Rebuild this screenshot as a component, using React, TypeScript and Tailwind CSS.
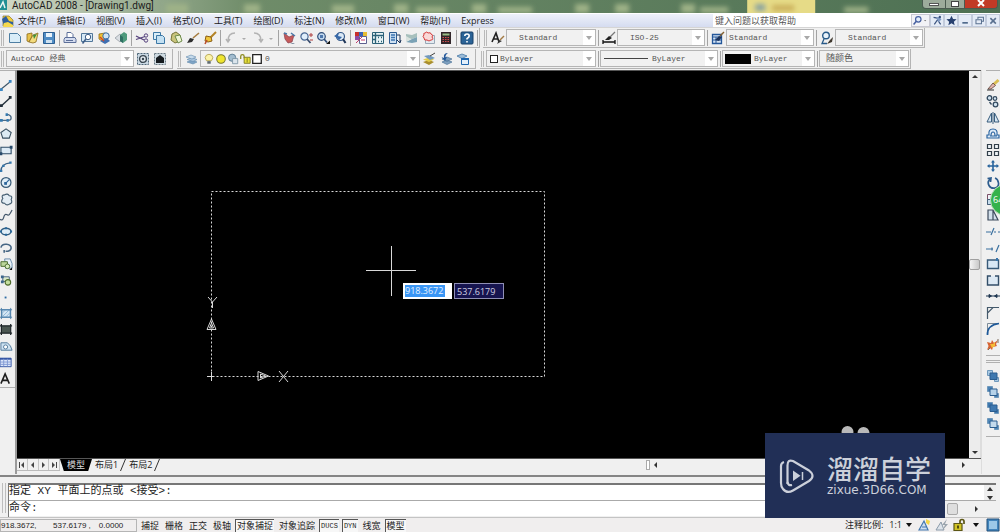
import React from "react";

const icons: Record<string, React.ReactNode> = {
  // standard toolbar
  new: <path d="M1.5 2.5h8l3 3v6h-11z" fill="#d9edf8" stroke="#4d7ea3" />,
  open: (
    <>
      <path d="M2 3l5-1v3l-3 6-2-1z" fill="#e8c24a" stroke="#8a6a1a" strokeWidth=".8" />
      <path d="M4 11L8 4l5-2-2 9-3 1z" fill="#f3dc7e" stroke="#8a6a1a" strokeWidth=".8" />
      <path d="M8 4l4-1-3 5z" fill="#3f8f3c" />
    </>
  ),
  save: (
    <>
      <path d="M1.5 1.5h11v11h-11z" fill="#4f8cc4" stroke="#2c5f92" />
      <path d="M4 2h6v4H4z" fill="#e8f3fb" />
      <path d="M4 9h6v3H4z" fill="#cfe2f1" />
    </>
  ),
  print: (
    <>
      <path d="M4 6V1.5h4l2 2V6" fill="#fff" stroke="#5c6f99" />
      <path d="M2 6.5h10l1 2v3H1v-3z" fill="#d4dcef" stroke="#5c6f99" />
      <path d="M3 9.5h7" stroke="#5c6f99" />
    </>
  ),
  preview: (
    <>
      <path d="M1.5 2.5h11v8h-11z" fill="#d6e8f5" stroke="#52779a" />
      <circle cx="8" cy="6" r="2.7" fill="#fff" stroke="#3f5f88" />
      <path d="M6 8l-3.5 4.5" stroke="#3f5f88" strokeWidth="1.6" />
    </>
  ),
  publish: (
    <>
      <path d="M2 3l6-1 3 5-4 4-5-3z" fill="#f2c230" stroke="#8c6b17" strokeWidth=".8" />
      <circle cx="9" cy="5" r="3.2" fill="#cfe3f4" stroke="#38699c" />
      <path d="M3 10l5 3 5-3-3-3z" fill="#3f6fb1" />
      <path d="M3 6l4 4" stroke="#d2452b" strokeWidth="1.5" />
    </>
  ),
  dwf: (
    <>
      <path d="M1 7l5-4 4 3-4 5z" fill="#d9dde2" stroke="#8e959e" strokeWidth=".7" />
      <path d="M6 4l4-3 3 2v6l-4 3-3-2z" fill="#4f9a7d" />
      <path d="M6 4l3 2v6l-3-2z" fill="#2f6f63" />
    </>
  ),
  cut: (
    <>
      <path d="M1 5l8 4M1 8.500l9-3" stroke="#54407c" strokeWidth="1.3" />
      <circle cx="11" cy="4.500" r="1.7" fill="none" stroke="#54407c" />
      <circle cx="11" cy="9.500" r="1.7" fill="none" stroke="#54407c" />
    </>
  ),
  copy: (
    <>
      <path d="M1.5 1.500h7v7h-7z" fill="#d9edf8" stroke="#3c78a5" />
      <path d="M4.500 4.500h6l2 2v6h-8z" fill="#c3e0f2" stroke="#3c78a5" />
    </>
  ),
  paste: (
    <>
      <path d="M3 3l4-2 4 3v6l-5 2-4-3z" fill="#c9c47c" stroke="#77753a" />
      <path d="M6 5l5-1 2 6-4 2z" fill="#eef5d4" stroke="#6d8b4a" />
    </>
  ),
  match: (
    <>
      <path d="M13 2L7 7" stroke="#a67c40" strokeWidth="1.6" />
      <path d="M1 12l3-5 4 1-2 3z" fill="#2d2d2d" />
    </>
  ),
  block: (
    <>
      <path d="M13 1L7 7" stroke="#b38225" strokeWidth="2" />
      <path d="M3 5l5 1 1 4-4 1-3-1z" fill="#f0c63c" stroke="#8a5d13" />
      <path d="M2 13l2-4" stroke="#bb4b2a" strokeWidth="1.6" />
    </>
  ),
  undo: <path d="M11 2Q4 2 4 10M2 8l2 3 2-3" fill="none" stroke="#b3b3b3" strokeWidth="1.500" />,
  redo: <path d="M3 2Q10 2 10 10M8 8l2 3 2-3" fill="none" stroke="#b3b3b3" strokeWidth="1.500" />,
  more: <path d="M5 7h4l-2 2z" fill="#aaa" />,
  pan: (
    <>
      <path d="M2 2l5 4 5-2-2 7-4 1-3-4z" fill="#c65a5a" stroke="#843c4a" strokeWidth=".7" />
      <path d="M9 2l4 3M2 2l3 1" stroke="#4a79a8" strokeWidth="1.5" />
      <path d="M8 12h5l-2 1z" fill="#6e7f94" />
    </>
  ),
  zoom: (
    <>
      <circle cx="5.500" cy="5.500" r="3.600" fill="#e0eefa" stroke="#486894" strokeWidth="1.2" />
      <path d="M8 8l3.500 4" stroke="#3a4d6e" strokeWidth="1.800" />
      <path d="M10 4h4M12 2v4M11 9h3" stroke="#b04040" />
    </>
  ),
  zoomWindow: (
    <>
      <circle cx="5.500" cy="5.500" r="3.800" fill="#c3daf0" stroke="#314f7a" strokeWidth="1.2" />
      <path d="M4 4h3v3H4z" fill="#4e77ac" />
      <path d="M8 8l3 3.500" stroke="#314f7a" strokeWidth="1.800" />
      <path d="M10 13h4V9.500z" fill="#111" />
    </>
  ),
  zoomPrev: (
    <>
      <circle cx="7.500" cy="5.500" r="4" fill="#dbe9f6" stroke="#355a8a" strokeWidth="1.2" />
      <path d="M10 8l2.500 4" stroke="#1f3558" strokeWidth="2" />
      <path d="M1 5l5-3-1 3 4 1-3 3-2-2z" fill="#3668a8" />
    </>
  ),
  properties: (
    <>
      <path d="M1 1h4v4H1z" fill="#c7302b" />
      <path d="M5 1h4v4H5z" fill="#3a62b8" />
      <path d="M9 1h4v4H9z" fill="#e7bd32" />
      <path d="M1 5h4v4H1z" fill="#8e4ba4" />
      <path d="M5.500 5.500h7v7h-7z" fill="#fff" stroke="#5d5f8f" />
      <path d="M2 12l6-6M7 9h4" stroke="#c33c6c" />
    </>
  ),
  designCenter: (
    <>
      <path d="M1.500 1.500h11v11h-11z" fill="#e7f2f4" stroke="#2b6177" />
      <path d="M4.500 1v12M2 4.500h10M7 6.500h1M10 6.500h1M7 10.500h1M10 10.500h1M2 8.500h2" stroke="#2b6177" strokeWidth="1.300" />
    </>
  ),
  palettes: (
    <>
      <path d="M1.500 1.500h7v11h-7z" fill="#cfe1f2" stroke="#2f5d91" />
      <path d="M3 4h4M3 6.500h4M3 9h4" stroke="#3b73af" strokeWidth="1.400" />
      <path d="M9 4h3v7M9 9l3 3 1-3" fill="none" stroke="#1c3459" />
    </>
  ),
  sheets: (
    <>
      <path d="M1 3l6 1 5-2v4l-5 2-6-1z" fill="#a7c0bd" />
      <path d="M1 11l6 1 5-1V6L7 8z" fill="#7ba2b5" />
      <path d="M1 5l5 3-5 3z" fill="#d8e2de" />
    </>
  ),
  markup: (
    <>
      <path d="M3.500 4.500h9v8h-9z" fill="#e3eaf0" stroke="#98a9b7" />
      <path d="M3 2q2-2 3 0 3-1 3 1 3 1 1 3 2 3-1 3-2 2-4 0-3 1-3-2-2-2 0-3-1-2 1-2z" fill="#f9d8d6" stroke="#d43b3b" />
    </>
  ),
  calc: (
    <>
      <path d="M2 1h10v12H2z" fill="#31262a" />
      <path d="M3.500 2.500h7v2h-7z" fill="#99bd85" />
      <path d="M3.500 6.500h7M3.500 8.500h7M3.500 10.500h7" stroke="#d25050" strokeDasharray="1.500 1" />
    </>
  ),
  help: (
    <>
      <rect x="1" y="1" width="12" height="12" rx="1" fill="#2b6396" stroke="#184168" />
      <path d="M4.800 5q0-2 2.200-2t2.200 2q0 1.200-2.200 2.600v1M7 10v1.500" fill="none" stroke="#fff" strokeWidth="1.600" />
    </>
  ),
  // style icons
  textStyle: (
    <>
      <path d="M1 11L5 2l3 9M2.500 8h4" fill="none" stroke="#202020" strokeWidth="1.600" />
      <path d="M13 5L9 9" stroke="#a27a44" strokeWidth="1.500" />
      <path d="M6 13l2-4 3 1z" fill="#333" />
    </>
  ),
  dimStyle: (
    <>
      <path d="M1 11h12M1 9v4M13 9v4" stroke="#111" strokeWidth="1.300" />
      <path d="M13 1L8 6" stroke="#777" strokeWidth="1.300" />
      <path d="M3 9l4-4 3 2-3 2z" fill="#222" />
    </>
  ),
  tableStyle: (
    <>
      <path d="M1.500 3.500h9v9h-9z" fill="#d4e3f3" stroke="#24579a" strokeWidth="1.300" />
      <path d="M2 6h8M2 9h8M5 6v6" stroke="#24579a" />
      <path d="M13 1L9 5" stroke="#84602f" strokeWidth="1.500" />
      <path d="M4 9l4-4 3 1-3 4z" fill="#1d345c" />
    </>
  ),
  leaderStyle: (
    <>
      <circle cx="6" cy="4.500" r="3.300" fill="#e8f2fa" stroke="#285a88" strokeWidth="1.400" />
      <path d="M4 8l-2 4.500h5" fill="none" stroke="#285a88" strokeWidth="1.300" />
      <path d="M13 6l-3 3-3 4 5-2z" fill="#3e372d" />
    </>
  ),
  // workspace and layers
  gear: (
    <>
      <path d="M1.500 1.500h11v11h-11z" fill="#c9d8e3" stroke="#4f6779" strokeDasharray="2 1" />
      <circle cx="7" cy="7" r="3.400" fill="#dfe7ed" stroke="#38454f" strokeWidth="1.400" />
      <circle cx="7" cy="7" r="1.200" fill="#38454f" />
    </>
  ),
  workspace: (
    <>
      <path d="M1.500 1.500h11v11h-11z" fill="#cdd9e0" stroke="#6b7b85" strokeDasharray="2 1" />
      <path d="M3 11V6l4-3 4 3v5z" fill="#151a1e" />
    </>
  ),
  layers: (
    <>
      <path d="M2 10l5-2 5 2-4 2z" fill="#7ea4c6" stroke="#6289ad" strokeWidth=".6" />
      <path d="M2 7.500l5-2 5 2-4 2z" fill="#a9c4dd" stroke="#6289ad" strokeWidth=".6" />
      <path d="M1 5l5-2 5 2-4 2z" fill="#c7dbec" stroke="#6289ad" strokeWidth=".6" />
    </>
  ),
  bulb: (
    <>
      <path d="M4 9Q1 5 4 2.500q3-2 6 0Q13 5 10 9z" fill="#fbf3a8" stroke="#b3a04d" />
      <path d="M5 9.500h4v3H5z" fill="#5f6a70" />
    </>
  ),
  sun: <circle cx="7" cy="7" r="5" fill="#efe52f" stroke="#77762b" strokeWidth="1.200" />,
  freeze: (
    <>
      <circle cx="6" cy="5.500" r="4.200" fill="#a2bccf" stroke="#55768d" />
      <path d="M6.500 6.500h6v6h-6z" fill="#dbe5ec" stroke="#7c94a5" />
    </>
  ),
  padlock: (
    <>
      <path d="M2 7V4q0-2 2-2t2 2v2" fill="none" stroke="#8c8a20" strokeWidth="1.500" />
      <path d="M6 5h7v7H6z" fill="#e9e23a" stroke="#77741c" />
      <path d="M9.500 6v5" stroke="#77741c" />
    </>
  ),
  swatch: <path d="M2 2h10v10H2z" fill="#fff" stroke="#222" strokeWidth="1.500" />,
  layerMatch: (
    <>
      <path d="M1 10l6-2 5 2-5 3z" fill="#a98e2e" />
      <path d="M1 7.500l6-2 5 2-5 2.500z" fill="#e3cd4c" />
      <path d="M2 4l5-1 6 3-5 2z" fill="#7299bd" />
      <path d="M8 4l5-3" stroke="#444" />
    </>
  ),
  layerPrev: (
    <>
      <path d="M3 10l5-2 5 2-5 2.500zM3 7l5-2 5 2-5 2.500z" fill="#7fa0c0" stroke="#4f759a" strokeWidth=".7" />
      <path d="M9 1Q4 1 5 6L2.500 5 6 9l2-4-1.500.5Q6 3 9 1z" fill="#23589a" />
    </>
  ),
  layerStates: (
    <>
      <path d="M1 4l5-2 5 2-5 2.500z" fill="#9cbcd8" stroke="#5f8bb3" />
      <path d="M5.500 6.500h7v6h-7z" fill="#e3effa" stroke="#1f67af" />
      <path d="M5 7h8" stroke="#1f67af" strokeWidth="2" />
    </>
  ),
  // draw palette
  line: (
    <>
      <path d="M1 11L11 3" stroke="#3d5568" strokeWidth="1.200" />
      <path d="M0 10h3v3H0zM9.500 1h3v3h-3z" fill="#3a86c2" />
    </>
  ),
  ray: (
    <>
      <path d="M1 12L11 3" stroke="#232f3a" strokeWidth="1.500" />
      <path d="M0 10h3v3H0zM9.500 1h3v3h-3z" fill="#232f3a" />
    </>
  ),
  polyline: (
    <>
      <path d="M1 10h8q3 0 3-2.500T9 4H7" fill="none" stroke="#4c6a85" strokeWidth="1.400" />
      <path d="M0 8.500h3v3H0zM6 2.500h2.500v3H6zM7 8.500h2.500v3H7z" fill="#3579ae" />
    </>
  ),
  polygon: <path d="M6.500 2l5.500 4-2 6H3L1 6z" fill="#dceaf3" stroke="#384f60" strokeWidth="1.200" />,
  rectangle: (
    <>
      <path d="M1 3.500h11v7H1z" fill="#dceaf5" stroke="#2f4e68" strokeWidth="1.200" />
      <path d="M10.500 2h3v3h-3zM0 9h2.500v3H0z" fill="#27496a" />
    </>
  ),
  arc: (
    <>
      <path d="M1 12Q1 4 11 3" fill="none" stroke="#385f84" strokeWidth="1.400" />
      <path d="M0 10.500h2.500V13H0zM10 1.500h2.500V4H10zM2.500 5H5v2.500H2.500z" fill="#3579ae" />
    </>
  ),
  circle: (
    <>
      <circle cx="6.500" cy="7" r="5.300" fill="#e0eef7" stroke="#395b77" strokeWidth="1.300" />
      <path d="M6 8l4-4" stroke="#2c659a" strokeWidth="1.200" />
      <path d="M4.500 6.500h3v3h-3z" fill="#2c659a" />
    </>
  ),
  cloud: <path d="M3 6Q1 2 5 2q3-2 5 1 4 0 2 4 2 4-2 5-3 2-5-1-4 0-3-3 0-1 1-2z" fill="#e3edf4" stroke="#455d70" strokeWidth="1.200" />,
  spline: <path d="M0 11q3 2 4-2t3-3 3 0 3-5" fill="none" stroke="#42566a" strokeWidth="1.300" />,
  ellipse: (
    <>
      <ellipse cx="6.500" cy="7" rx="5.300" ry="3.500" fill="#e0eef7" stroke="#325d80" strokeWidth="1.500" />
      <path d="M5.500 2.500h2v2h-2zM5.500 9.500h2v2h-2zM0 6h2v2H0zM11 6h2v2h-2z" fill="#27699d" />
    </>
  ),
  ellipseArc: <path d="M1 6q1-4 6-3.500t5 4Q11.500 10 6 10M4.500 8.500v3" fill="none" stroke="#466684" strokeWidth="1.700" />,
  insert: (
    <>
      <path d="M5 1h6l2 5v5H6z" fill="#e8f1f8" stroke="#6388a9" />
      <path d="M1 4h7v5H1z" fill="#bcd69a" stroke="#496a2d" />
      <circle cx="8" cy="9" r="2.500" fill="#d8ecbd" stroke="#496a2d" />
      <path d="M10 13h3v-3z" fill="#111" />
    </>
  ),
  makeBlock: (
    <>
      <path d="M3 3h7v5H3z" fill="#dceacb" stroke="#456082" />
      <circle cx="8.500" cy="9" r="3" fill="#c5dfa0" stroke="#4c6a2a" strokeWidth="1.200" />
      <path d="M1 1.500h3v3H1zM1 7h3v3H1z" fill="#3d668c" />
    </>
  ),
  point: <path d="M5 6h2v2H5z" fill="#2c6ba3" />,
  hatch: (
    <>
      <path d="M2 3h9v8H2z" fill="#d5e7f4" stroke="#3f79a8" />
      <path d="M2 7l4-4M2 11l8-8M6 11l5-5" stroke="#8ab2d4" />
      <path d="M0 3h13M0 11h13M1.500 1v12M11.500 1v12" stroke="#4b7da8" />
    </>
  ),
  gradient: (
    <>
      <path d="M2 3h9v8H2z" fill="#4b5752" />
      <path d="M0 3h13M0 11h13M1.500 1v12M11.500 1v12" stroke="#1d2427" strokeWidth="1.300" />
    </>
  ),
  region: (
    <>
      <path d="M1 3h7q4 3 5 8H1z" fill="#cfe3f2" stroke="#4f7799" />
      <circle cx="6" cy="7.500" r="2.200" fill="#fff" stroke="#4f7799" />
    </>
  ),
  table: (
    <>
      <path d="M0 2.500h12v9H0z" fill="#dce6fa" stroke="#3555a5" />
      <path d="M0 3h12" stroke="#3555a5" strokeWidth="2" />
      <path d="M0 6.500h12M0 9h12M4 3v8M8 3v8" stroke="#7f98d4" />
    </>
  ),
  text: <path d="M1 12.500L5.500 2 10 12.500M3 9h5" fill="none" stroke="#1d1d1d" strokeWidth="1.700" />,
  // modify palette
  erase: (
    <>
      <path d="M12.500 2L7 7" stroke="#d9bd52" strokeWidth="3" />
      <path d="M7 5l2.500 2.500L5 11H2z" fill="#e2b3ad" stroke="#5a4137" strokeWidth=".8" />
      <path d="M1 12h7" stroke="#333" />
    </>
  ),
  duplicate: (
    <>
      <circle cx="3.500" cy="4" r="2.300" fill="#d2e3f0" stroke="#32495e" strokeWidth="1.300" />
      <circle cx="9.500" cy="10.500" r="2.300" fill="#d2e3f0" stroke="#32495e" strokeWidth="1.300" />
      <circle cx="9" cy="4.500" r="1.800" fill="#d2e3f0" stroke="#32495e" strokeWidth="1.200" />
      <path d="M3.500 8l2 2.500" stroke="#32495e" strokeWidth="1.300" />
    </>
  ),
  mirror: (
    <>
      <path d="M5.500 2v9H1zM8.500 2v9H13z" fill="#d7e6f2" stroke="#385c7c" />
      <path d="M7 1v12" stroke="#385c7c" />
    </>
  ),
  offset: <path d="M1 11h12V8h-2q1-6-4-6T3 8H1zM4 9h7M5 9q0-4 2-4t2 4" fill="#dceaf7" stroke="#2b64a0" strokeWidth="1.200" />,
  array: <path d="M1.500 1.500h4v4h-4zM8.500 1.500h4v4h-4zM1.500 8.500h4v4h-4zM8.500 8.500h4v4h-4z" fill="#eef3f7" stroke="#323f4a" strokeWidth="1.200" />,
  move: <path d="M7 1l2 2.500H7.800v2.700h2.700V5L13 7l-2.500 2V7.800H7.800v2.700H9L7 13l-2-2.500h1.200V7.800H3.500V9L1 7l2.500-2v1.200h2.700V3.500H5z" fill="#27639c" />,
  rotate: <path d="M4 3Q1 6 3 9.500T9 12t3.500-5T9 2M1.500 2.500L5 2l-.5 4" fill="none" stroke="#2e5d8e" strokeWidth="1.700" />,
  scale: (
    <>
      <path d="M1.500 2.500h11v10h-11z" fill="#eef2f6" stroke="#7c4f68" />
      <path d="M1.500 7.500h5v5h-5z" fill="#c7dcec" stroke="#46617a" />
    </>
  ),
  stretch: <path d="M2 2h5l5 10H2zM7 2v10" fill="#d2dfea" stroke="#3d4a5c" strokeWidth="1.200" />,
  trim: <path d="M0 8h5M8 8h2M12 8h2M5 11l3-7" stroke="#396f9e" strokeWidth="1.200" />,
  extend: <path d="M0 8h7M10 11l3-7M6 6.500v3" stroke="#396f9e" strokeWidth="1.200" />,
  breakPoint: (
    <>
      <path d="M1.500 3h11v8.500h-11z" fill="#d9e8f5" stroke="#385a79" strokeWidth="1.400" />
      <path d="M10 1h2v3h-2z" fill="#3876ad" />
    </>
  ),
  break: <path d="M5 3H1.500v9h11V3H9" fill="#dde9f4" stroke="#334e68" strokeWidth="1.400" />,
  join: <path d="M0 7h14M3 5.500L5.500 7 3 8.500zM11 5.500L8.500 7l2.500 1.500z" fill="#1e3651" stroke="#1e3651" />,
  chamfer: <path d="M1.500 13V7L7 1.500h6M1.500 7V1.500H7" fill="none" stroke="#44596b" strokeWidth="1.200" />,
  fillet: (
    <>
      <path d="M1.500 13V1.500H13" fill="none" stroke="#7c8b98" />
      <path d="M1.500 13Q1 3 13 1.500" fill="none" stroke="#1e5999" strokeWidth="1.700" />
    </>
  ),
  explode: (
    <>
      <path d="M1 4l4 1 1-3 2 3 4-3-2 4 1 2-4 1-1 3-2-2-3 2 1.500-4z" fill="#d66434" />
      <path d="M4 6h3l2-2v4l-3 2z" fill="#f4bb35" />
      <path d="M12 1v2M13 4h-2M2 12l2-2" stroke="#7d6a5a" />
    </>
  ),
  // info bar
  search: (
    <>
      <circle cx="8" cy="5.500" r="3.500" fill="#e2ecfa" stroke="#4760a1" strokeWidth="1.500" />
      <path d="M5.500 8L2 12" stroke="#4760a1" strokeWidth="2" />
    </>
  ),
  comm: (
    <>
      <path d="M2 3l5 1M10 2L7 6l4 6M7 6l-4 6" stroke="#39527e" strokeWidth="1.500" />
      <path d="M5 3h5l2 3-4 3z" fill="#7f9ac4" />
      <circle cx="10" cy="2.500" r="1.500" fill="#39527e" />
    </>
  ),
  star: <path d="M7 1l2 4 4.500.5-3.500 3 1 4.500-4-2.500L3 13l1-4.500-3.500-3L5 5z" fill="#27406f" />,
  minimize: <path d="M3 10h7" stroke="#456184" strokeWidth="2" />,
  restore: <path d="M5 5V3h7v5h-2M2.500 6h7v5h-7z" fill="none" stroke="#5a7190" strokeWidth="1.300" />,
  close: <path d="M3 4l7 7M10 4l-7 7" stroke="#5a7190" strokeWidth="2" />,
  // tray
  annoVisible: (
    <>
      <path d="M1 12l5-9 4 9zM4 9h5" fill="#cfdff0" stroke="#4277ad" strokeWidth="1.200" />
      <path d="M8 1l4 2-1 4-3-2z" fill="#f3d648" />
    </>
  ),
  annoAuto: (
    <>
      <path d="M1 12l5-8 3 8z" fill="#dde3ea" stroke="#8a9aa9" />
      <path d="M12 1L7 7h3l-3 6 6-7h-3z" fill="#9aa4ad" />
    </>
  ),
  unlock: (
    <>
      <path d="M8 6V3.500Q8 1.500 10 1.500t2 2V6" fill="none" stroke="#5c5614" strokeWidth="1.700" />
      <path d="M2 5.500h8v7H2z" fill="#d1c324" stroke="#5c5614" strokeWidth="1.200" />
      <path d="M6 7.500v3" stroke="#423d0c" strokeWidth="1.800" />
    </>
  ),
  clean: (
    <>
      <path d="M1 1h12v12H1z" fill="#4385bd" stroke="#24537c" />
      <path d="M3 3h8v8H3z" fill="#9cc8e8" />
    </>
  ),
};

const Order = ({ mid, back }: { mid: string; back: string }) => (
  <svg viewBox="0 0 14 14" className="h-3.5 w-3.5 shrink-0">
    <path d="M1.500 1.500h5v5h-5z" fill={back} stroke="#6f98bb" />
    <path d="M8.500 8.500h4v4h-4z" fill={back} stroke="#6f98bb" />
    <path d="M4 4h7v6.500H4z" fill={mid} stroke="#2a5d8f" />
  </svg>
);

const Icon = ({ name }: { name: string }) => (
  <svg viewBox="0 0 14 14" className="h-3.5 w-3.5 shrink-0" fill="none">
    {icons[name]}
  </svg>
);

const Tool = ({ name }: { name: string }) => (
  <button
    aria-label={name}
    className={`flex h-4 shrink-0 items-center justify-center ${name === "more" ? "w-2.5" : "w-[17px]"}`}
  >
    <Icon name={name} />
  </button>
);

const Tools = ({ names }: { names: string[] }) => (
  <>
    {names.map((name, i) => (
      <Tool key={i} name={name} />
    ))}
  </>
);

const Separator = () => (
  <div className="flex h-4 w-1 shrink-0 justify-center">
    <div className="w-px bg-[#a3a3a3]" />
  </div>
);

const Toolbar = ({ pad = "", children }: { pad?: string; children: React.ReactNode }) => (
  <div className={`flex h-5 shrink-0 items-center border-r border-b border-[#b4b4b4] ${pad}`}>
    <div className="mr-0.5 ml-px h-4 w-[3px] shrink-0 border-x border-[#b9b9b9]" />
    {children}
  </div>
);

type ComboProps = {
  label: string;
  options: string[];
  className: string;
  pad?: string;
  children?: React.ReactNode;
};

const Combo = ({ label, options, className, pad = "pl-0.5", children }: ComboProps) => (
  <label
    className={`flex h-[17px] shrink-0 items-center border border-[#b5b5b5] bg-[#f1f1f1] ${className}`}
  >
    {children}
    <select
      aria-label={label}
      className={`h-full min-w-0 flex-1 appearance-none font-['Liberation_Mono','Noto_Sans_CJK_SC',monospace] text-[8px] leading-3 text-[#555] ${pad}`}
    >
      {options.map((o) => (
        <option key={o}>{o}</option>
      ))}
    </select>
    <span className="flex h-full w-3 items-center justify-center bg-white">
      <svg viewBox="0 0 6 4" className="h-1 w-1.5">
        <path d="M0 0h6L3 4z" fill="#a8a8a8" />
      </svg>
    </span>
  </label>
);

const menus = ["文件(F)", "编辑(E)", "视图(V)", "插入(I)", "格式(O)", "工具(T)", "绘图(D)", "标注(N)", "修改(M)", "窗口(W)", "帮助(H)", "Express"];

const drawTools = ["line", "ray", "polyline", "polygon", "rectangle", "arc", "circle", "cloud", "spline", "ellipse", "ellipseArc", "insert", "makeBlock", "point", "hatch", "gradient", "region", "table", "text"];

const modifyTools = ["erase", "duplicate", "mirror", "offset", "array", "move", "rotate", "scale", "stretch", "trim", "extend", "breakPoint", "break", "join", "chamfer", "fillet", "explode"];

const modes = [
  { label: "捕捉", on: false },
  { label: "栅格", on: false },
  { label: "正交", on: false },
  { label: "极轴", on: false },
  { label: "对象捕捉", on: true },
  { label: "对象追踪", on: false },
  { label: "DUCS", on: true },
  { label: "DYN", on: true },
  { label: "线宽", on: false },
  { label: "模型", on: true },
];

const Arrow = ({ d, label }: { d: string; label: string }) => (
  <button aria-label={label} className="flex h-3 w-3 shrink-0 items-center justify-center">
    <svg viewBox="0 0 8 8" className="h-2 w-2">
      <path d={d} fill="#333" />
    </svg>
  </button>
);

const TitleBar = () => (
  <header className="flex h-[13px] shrink-0 items-start justify-between bg-linear-to-r from-[#d3dac9] via-[#6f8c69] via-25% to-[#4d7053] pr-0.5">
    <div className="flex h-3 items-center gap-1">
      <svg viewBox="0 0 8 12" className="h-3 w-2">
        <path d="M0 0h7v10H0z" fill="#1f8f93" />
        <path d="M0 8l3-6 2 6" fill="none" stroke="#e8f4f2" strokeWidth="1.500" />
      </svg>
      <h1 className="font-[Roboto,sans-serif] text-[10px] leading-3 whitespace-nowrap text-[#1c1c1c]">
        AutoCAD 2008 - [Drawing1.dwg]
      </h1>
    </div>
    <svg viewBox="0 0 768 13" preserveAspectRatio="none" className="h-[13px] min-w-0 flex-1">
      <defs>
        <filter id="soft" x="-20%" y="-50%" width="140%" height="200%">
          <feGaussianBlur stdDeviation="2.500" />
        </filter>
      </defs>
      <g filter="url(#soft)" fill="#9fb287">
        <path d="M12 4h22v9H12zM90 4h16v9H90zM178 5h22v8h-22zM240 4h14v9h-14zM262 7h30v6h-30zM318 4h14v9h-14zM344 7h34v6h-34zM421 4h14v9h-14zM461 4h14v9h-14zM527 4h14v9h-14zM546 7h28v6h-28zM690 7h24v6h-24z" />
      </g>
      <path d="M593 0h68v13h-68z" fill="#e6db87" />
      <g filter="url(#soft)">
        <path d="M601 4h10v7h-10z" fill="#8aa3a0" />
        <path d="M618 5h22v6h-22z" fill="#cbb05c" />
      </g>
    </svg>
    <div className="flex h-[9px] shrink-0 overflow-hidden rounded-b border border-t-0 border-[#4b5b50]">
      <button aria-label="minimize window" className="flex w-[22px] items-end justify-center bg-[#9dab9b] pb-0.5">
        <span className="h-[3px] w-2.5 border border-[#555] bg-white" />
      </button>
      <button aria-label="restore window" className="flex w-5 items-center justify-center border-x border-[#4b5b50] bg-[#9dab9b]">
        <span className="h-1.5 w-2 border border-[#444] bg-white" />
      </button>
      <button aria-label="close window" className="flex w-8 items-center justify-center bg-[#c23a26]">
        <svg viewBox="0 0 10 8" className="h-2 w-2.5">
          <path d="M2 0l6 6M8 0L2 6" stroke="#fff" strokeWidth="2" />
        </svg>
      </button>
    </div>
  </header>
);

const MenuBar = () => (
  <nav className="flex h-[15px] shrink-0 items-center border-y border-t-white border-b-[#d5d5d5] bg-linear-to-b from-[#eef1fa] to-[#d5dcf0] pl-0.5">
    <svg viewBox="0 0 12 12" className="mr-1 h-3 w-3 shrink-0">
      <path d="M1 1h6l4 4v6H1z" fill="#f1cc3d" stroke="#8b7a2c" strokeWidth=".7" />
      <path d="M0 4l4-3 3 5 4 1v4H2z" fill="#2f5f9c" />
      <path d="M2 8l4-1 5 3v2H1z" fill="#f6d94d" />
    </svg>
    <div className="flex flex-1 gap-[11px]">
      {menus.map((m) => (
        <button key={m} className="shrink-0 text-[9px] leading-3 whitespace-nowrap text-[#1a1a1a]">
          {m}
        </button>
      ))}
    </div>
    <input
      aria-label="help search"
      defaultValue="键入问题以获取帮助"
      className="h-[13px] w-[198px] bg-white pl-0.5 text-[9px] leading-3 text-[#555]"
    />
    <div className="flex h-[13px] shrink-0 items-center [&_svg]:h-[11px] [&_svg]:w-[11px]">
      <button aria-label="search options" className="flex h-[13px] w-[19px] items-center border border-[#c8c8d2] bg-[#f2f2f6]">
        <Icon name="search" />
        <svg viewBox="0 0 11 11">
          <path d="M2 5h4L4 7z" fill="#444" />
        </svg>
      </button>
      {["comm", "star", "minimize", "restore", "close"].map((n) => (
        <button
          key={n}
          aria-label={n}
          className="flex h-[13px] w-3.5 items-center justify-center overflow-hidden border border-[#c2cbdc] bg-[#e4ebf6]"
        >
          <Icon name={n} />
        </button>
      ))}
    </div>
  </nav>
);

const ToolbarRows = () => (
  <div className="flex shrink-0 flex-col gap-px bg-[#f0f0f0] pb-px">
    <div className="flex gap-[3px]">
      <Toolbar>
        <Tools names={["new", "open", "save"]} />
        <Separator />
        <Tools names={["print", "preview", "publish", "dwf"]} />
        <Separator />
        <Tools names={["cut", "copy", "paste", "match", "block"]} />
        <Separator />
        <Tools names={["undo", "more", "redo", "more"]} />
        <Separator />
        <Tools names={["pan", "zoom", "zoomWindow", "zoomPrev"]} />
        <Separator />
        <Tools names={["properties", "designCenter", "palettes", "sheets", "markup", "calc"]} />
        <Separator />
        <Tool name="help" />
        <Separator />
      </Toolbar>
      <Toolbar pad="pr-px">
        <Tool name="textStyle" />
        <Combo label="text style" options={["Standard"]} className="w-[90px]" pad="pl-3" />
        <Separator />
        <Tool name="dimStyle" />
        <Combo label="dimension style" options={["ISO-25"]} className="w-[88px]" pad="pl-3" />
        <Separator />
        <Tool name="tableStyle" />
        <Combo label="table style" options={["Standard"]} className="w-[88px]" />
        <Separator />
        <Tool name="leaderStyle" />
        <Combo label="leader style" options={["Standard"]} className="w-[88px]" pad="pl-3" />
      </Toolbar>
    </div>
    <div className="flex gap-1">
      <Toolbar pad="pr-1">
        <Combo label="workspace" options={["AutoCAD 经典"]} className="w-32" pad="pl-1" />
        <Tools names={["gear", "workspace"]} />
      </Toolbar>
      <Toolbar pad="pr-1">
        <Tool name="layers" />
        <Combo label="layer" options={["0"]} className="w-[220px]">
          <span className="flex items-center pl-0.5 [&>svg]:h-3 [&>svg]:w-3">
            <Icon name="bulb" />
            <Icon name="sun" />
            <Icon name="freeze" />
            <Icon name="padlock" />
            <Icon name="swatch" />
          </span>
        </Combo>
        <Tools names={["layerMatch", "layerPrev", "layerStates"]} />
      </Toolbar>
      <Toolbar pad="pr-px">
        <Combo label="color" options={["ByLayer"]} className="w-[110px]">
          <span className="ml-[3px] h-2 w-2 border border-[#222] bg-white" />
        </Combo>
        <Separator />
        <Combo label="linetype" options={["ByLayer"]} className="w-[118px]" pad="pl-1">
          <span className="ml-[3px] h-px w-11 bg-[#444]" />
        </Combo>
        <Separator />
        <Combo label="lineweight" options={["ByLayer"]} className="w-[93px]" pad="pl-[3px]">
          <span className="ml-0.5 h-2.5 w-[26px] bg-black" />
        </Combo>
        <Separator />
        <Combo label="plot style" options={["随颜色"]} className="w-[90px] [&>select]:text-[9px]" pad="pl-1.5" />
      </Toolbar>
    </div>
  </div>
);

const Canvas = () => (
  <div className="relative min-w-0 flex-1 overflow-hidden bg-black">
    <svg width="952" height="388" fill="none" stroke="#d8d8d8" className="block">
      <path d="M194.500 120.500h333v185h-333z" strokeDasharray="2 2" />
      <path d="M374.500 175v50M349 199.500h50" />
      <path d="M190 305.500h7M194.500 301v9" />
      <path d="M191 226l4.500 5 4.500-5M195.500 231v6" />
      <path d="M194.500 248l-4.500 10.500h9zM194.500 252l-2 5h4zM241 300.500v9l10.500-4.500zM243.500 303v4l5-2z" />
      <path d="M262 300l9 11M271 300l-9 11" />
      <g fill="#b9b9b9" stroke="none">
        <circle cx="830.500" cy="361" r="6" />
        <circle cx="846.500" cy="362" r="6" />
      </g>
    </svg>
    <div className="absolute top-[212px] left-[386px] flex gap-0.5 text-[9px]">
      <label className="flex h-4 w-[49px] items-center bg-white pl-0.5">
        <input
          aria-label="x coordinate"
          defaultValue="918.3672"
          className="h-3 w-10 bg-[#3a96f5] leading-3 text-[#e6f2ff]"
        />
      </label>
      <input
        aria-label="y coordinate"
        defaultValue="537.6179"
        className="h-4 w-[50px] border border-[#8f8fb5] bg-[#16144f] pl-0.5 leading-3 text-[#cfcfe2]"
      />
    </div>
  </div>
);

const LayoutTabs = () => (
  <div className="flex h-4 shrink-0 items-start border-t border-[#555] bg-[#f0f0f0]">
    <div className="flex h-3 w-[43px] border-b border-[#bbb]">
      {[
        ["first", "M1 1h1v6H1zM6 1v6L3 4z"],
        ["previous", "M5 1v6L2 4z"],
        ["next", "M3 1v6l3-3z"],
        ["last", "M2 1v6l3-3zM6 1h1v6H6z"],
      ].map(([label, d]) => (
        <button key={label} aria-label={label} className="flex flex-1 items-center justify-center border-r border-[#c4c4c4]">
          <svg viewBox="0 0 8 8" className="h-2 w-2">
            <path d={d} fill="#444" />
          </svg>
        </button>
      ))}
    </div>
    <button className="h-3 w-8 bg-black text-center text-[9px] leading-3 text-[#ddd] [clip-path:polygon(0_0,100%_0,88%_100%,12%_100%)]">
      模型
    </button>
    {["布局1", "布局2"].map((t) => (
      <button key={t} className="flex h-3 items-center pl-[3px] text-[9px] leading-3 whitespace-nowrap text-[#222]">
        {t}
        <svg viewBox="0 0 6 12" className="ml-0.5 h-3 w-1.5">
          <path d="M5.500 0l-5 12" stroke="#333" />
        </svg>
      </button>
    ))}
    <div className="flex-1" />
    <div className="flex h-3 w-[335px] items-center pr-3">
      <span className="h-2.5 w-1 border border-[#aaa] bg-white" />
      <Arrow label="scroll left" d="M5 1v6L2 4z" />
      <div className="flex-1" />
      <Arrow label="scroll right" d="M3 1v6l3-3z" />
    </div>
  </div>
);

const Workspace = () => (
  <main className="flex min-h-0 flex-1 bg-[#f0f0f0]">
    <aside className="w-[17px] shrink-0 border-r-2 border-[#9b9b9b]">
      <div className="flex h-[318px] flex-col justify-between border-t border-b border-[#b0b0b0] pt-1.5">
        {drawTools.map((t) => (
          <button key={t} aria-label={t} className="flex h-4 w-3.5 items-center [&>svg]:h-[13px] [&>svg]:w-[13px]">
            <Icon name={t} />
          </button>
        ))}
      </div>
    </aside>
    <div className="flex min-w-0 flex-1 flex-col border-t border-[#555]">
      <div className="flex min-h-0 flex-1">
        <Canvas />
        <div className="flex w-3 shrink-0 flex-col items-center border-r border-[#ddd] bg-[#ececec]">
          <Arrow label="scroll up" d="M1 5h6L4 2z" />
          <div className="flex-1" />
          <span className="h-[11px] w-[11px] rounded-xs border border-[#9f9f9f] bg-linear-to-r from-[#f4f4f4] to-[#c9c9c9]" />
          <div className="flex-1" />
          <Arrow label="scroll down" d="M1 3h6L4 6z" />
        </div>
      </div>
      <LayoutTabs />
    </div>
    <aside className="relative w-[19px] shrink-0 border-l border-[#ddd] pl-1">
      <div className="flex h-[286px] flex-col justify-between border-t border-b border-[#b0b0b0] pt-1.5 pb-0.5">
        {modifyTools.map((t) => (
          <button key={t} aria-label={t} className="flex h-4 w-3.5 items-center">
            <Icon name={t} />
          </button>
        ))}
      </div>
      <div className="mt-1 border-t border-b border-[#b0b0b0] pt-px pb-1">
        <div className="mb-1 border-t border-[#b0b0b0] pt-px" />
        {[
          ["#3e78af", "#a9c9e3"],
          ["#b5d2e9", "#4b82b5"],
          ["#3e78af", "#3e78af"],
          ["#c3daec", "#4f87b8"],
        ].map(([mid, back], i) => (
          <button key={i} aria-label={`draw order ${i + 1}`} className="flex h-4 w-3.5 items-center">
            <Order mid={mid} back={back} />
          </button>
        ))}
      </div>
      <div className="absolute top-[114px] left-2 flex h-8 w-8 items-center rounded-full border border-[#b7dcb9] bg-[#35b24c] pl-0.5 text-[9px] text-white">
        64
      </div>
    </aside>
  </main>
);

const CommandWindow = () => (
  <section className="mt-px flex h-[42px] shrink-0 border-t-2 border-[#858585] bg-[#f0f0f0] pt-1.5 pr-1">
    <div className="mr-0.5 ml-0.5 h-[30px] w-1 border-x border-[#bdbdbd]" />
    <div className="flex min-w-0 flex-1 flex-col border-t-2 border-l border-[#777] font-['Liberation_Mono','Noto_Sans_CJK_SC',monospace] text-[11px] text-[#222]">
      <div className="flex h-[15px] bg-white">
        <p className="flex-1 leading-3 whitespace-pre">指定 XY 平面上的点或 &lt;接受&gt;:</p>
        <div className="flex w-3 flex-col items-center justify-between bg-[#eee]">
          <svg viewBox="0 0 6 4" className="mt-0.5 h-1 w-1.5">
            <path d="M0 4h6L3 0z" fill="#333" />
          </svg>
          <svg viewBox="0 0 6 4" className="h-1 w-1.5">
            <path d="M0 0h6L3 4z" fill="#333" />
          </svg>
        </div>
      </div>
      <div className="flex h-4 items-center border-t border-[#aaa]">
        <label htmlFor="command" className="h-full bg-white leading-[15px]">命令:</label>
        <input id="command" className="h-full min-w-0 flex-1 bg-white" />
        <div className="flex w-[120px] items-center justify-end">
          <span className="mr-3 h-3 w-[11px] rounded-xs border border-[#a9a9a9] bg-[#dedede]" />
          <Arrow label="scroll command line" d="M3 1v6l3-3z" />
          <span className="w-3.5" />
        </div>
      </div>
    </div>
  </section>
);

const StatusBar = () => (
  <footer className="flex h-[15px] shrink-0 items-end border-t border-[#c4c4c4] bg-[#f0eeee] text-[9px] text-[#1d1d1d]">
    <div className="flex h-[13px] w-[137px] shrink-0 items-center gap-2 border border-[#b5b5b5] text-[8px] whitespace-nowrap font-['Liberation_Sans',sans-serif]">
      <span className="w-11">918.3672,</span>
      <span>537.6179 ,</span>
      <span>0.0000</span>
    </div>
    <div className="flex flex-1 items-center gap-[3px] pl-0.5">
      {modes.map((m) => (
        <button
          key={m.label}
          aria-pressed={m.on}
          className={`h-[13px] shrink-0 border-t border-l px-px leading-3 whitespace-nowrap ${
            m.on ? "border-[#555] bg-[#f7f7f7]" : "border-[#f0eeee]"
          } ${/^D/.test(m.label) ? "font-['Liberation_Mono',monospace] text-[7px]" : ""}`}
        >
          {m.label}
        </button>
      ))}
    </div>
    <div className="flex h-[14px] shrink-0 items-center">
      <span className="leading-3">注释比例:</span>
      <button className="ml-1.5 flex items-center gap-1 leading-3">
        1:1
        <svg viewBox="0 0 6 4" className="h-1 w-1.5">
          <path d="M0 0h6L3 4z" fill="#111" />
        </svg>
      </button>
      <div className="ml-1.5 flex items-center gap-[3px]">
        <Icon name="annoVisible" />
        <Icon name="annoAuto" />
        <Icon name="unlock" />
        <svg viewBox="0 0 6 4" className="mx-1 h-1 w-1.5">
          <path d="M0 0h6L3 4z" fill="#111" />
        </svg>
        <Icon name="clean" />
      </div>
    </div>
  </footer>
);

const Watermark = () => (
  <div className="absolute right-[55px] bottom-3.5 flex h-[85px] w-[180px] items-center gap-3 bg-[#212f56] pl-3.5 text-[#ccd0da]">
    <svg viewBox="0 0 36 36" className="h-9 w-9 shrink-0" fill="none" stroke="#ccd0da" strokeWidth="2.200">
      <path d="M8.500 26V7.500Q8.500 1 14 3L30 12.500Q37 18 30 23L14 32.500Q8 36 4 31 2 29 2 25V8Q2 5 5 4" />
      <path d="M8.500 24Q9 28 13 27" />
      <path d="M14 12.500v10.500l7.500-5.200z" fill="#ccd0da" stroke="none" />
      <path d="M23.500 14v8" strokeWidth="1.500" />
    </svg>
    <div className="whitespace-nowrap">
      <p className="font-['Noto_Sans_CJK_SC',sans-serif] text-[26px] leading-6 font-medium">溜溜自学</p>
      <p className="mt-1 font-['DejaVu_Sans',sans-serif] text-xs leading-3">zixue.3D66.COM</p>
    </div>
  </div>
);

const App: React.FC = () => {
  return (
    <div className="relative flex h-screen flex-col overflow-hidden bg-[#f0f0f0] font-['Open_Sans','Noto_Sans_CJK_SC',sans-serif]">
      <TitleBar />
      <MenuBar />
      <ToolbarRows />
      <Workspace />
      <CommandWindow />
      <StatusBar />
      <Watermark />
    </div>
  );
};

export default App;
